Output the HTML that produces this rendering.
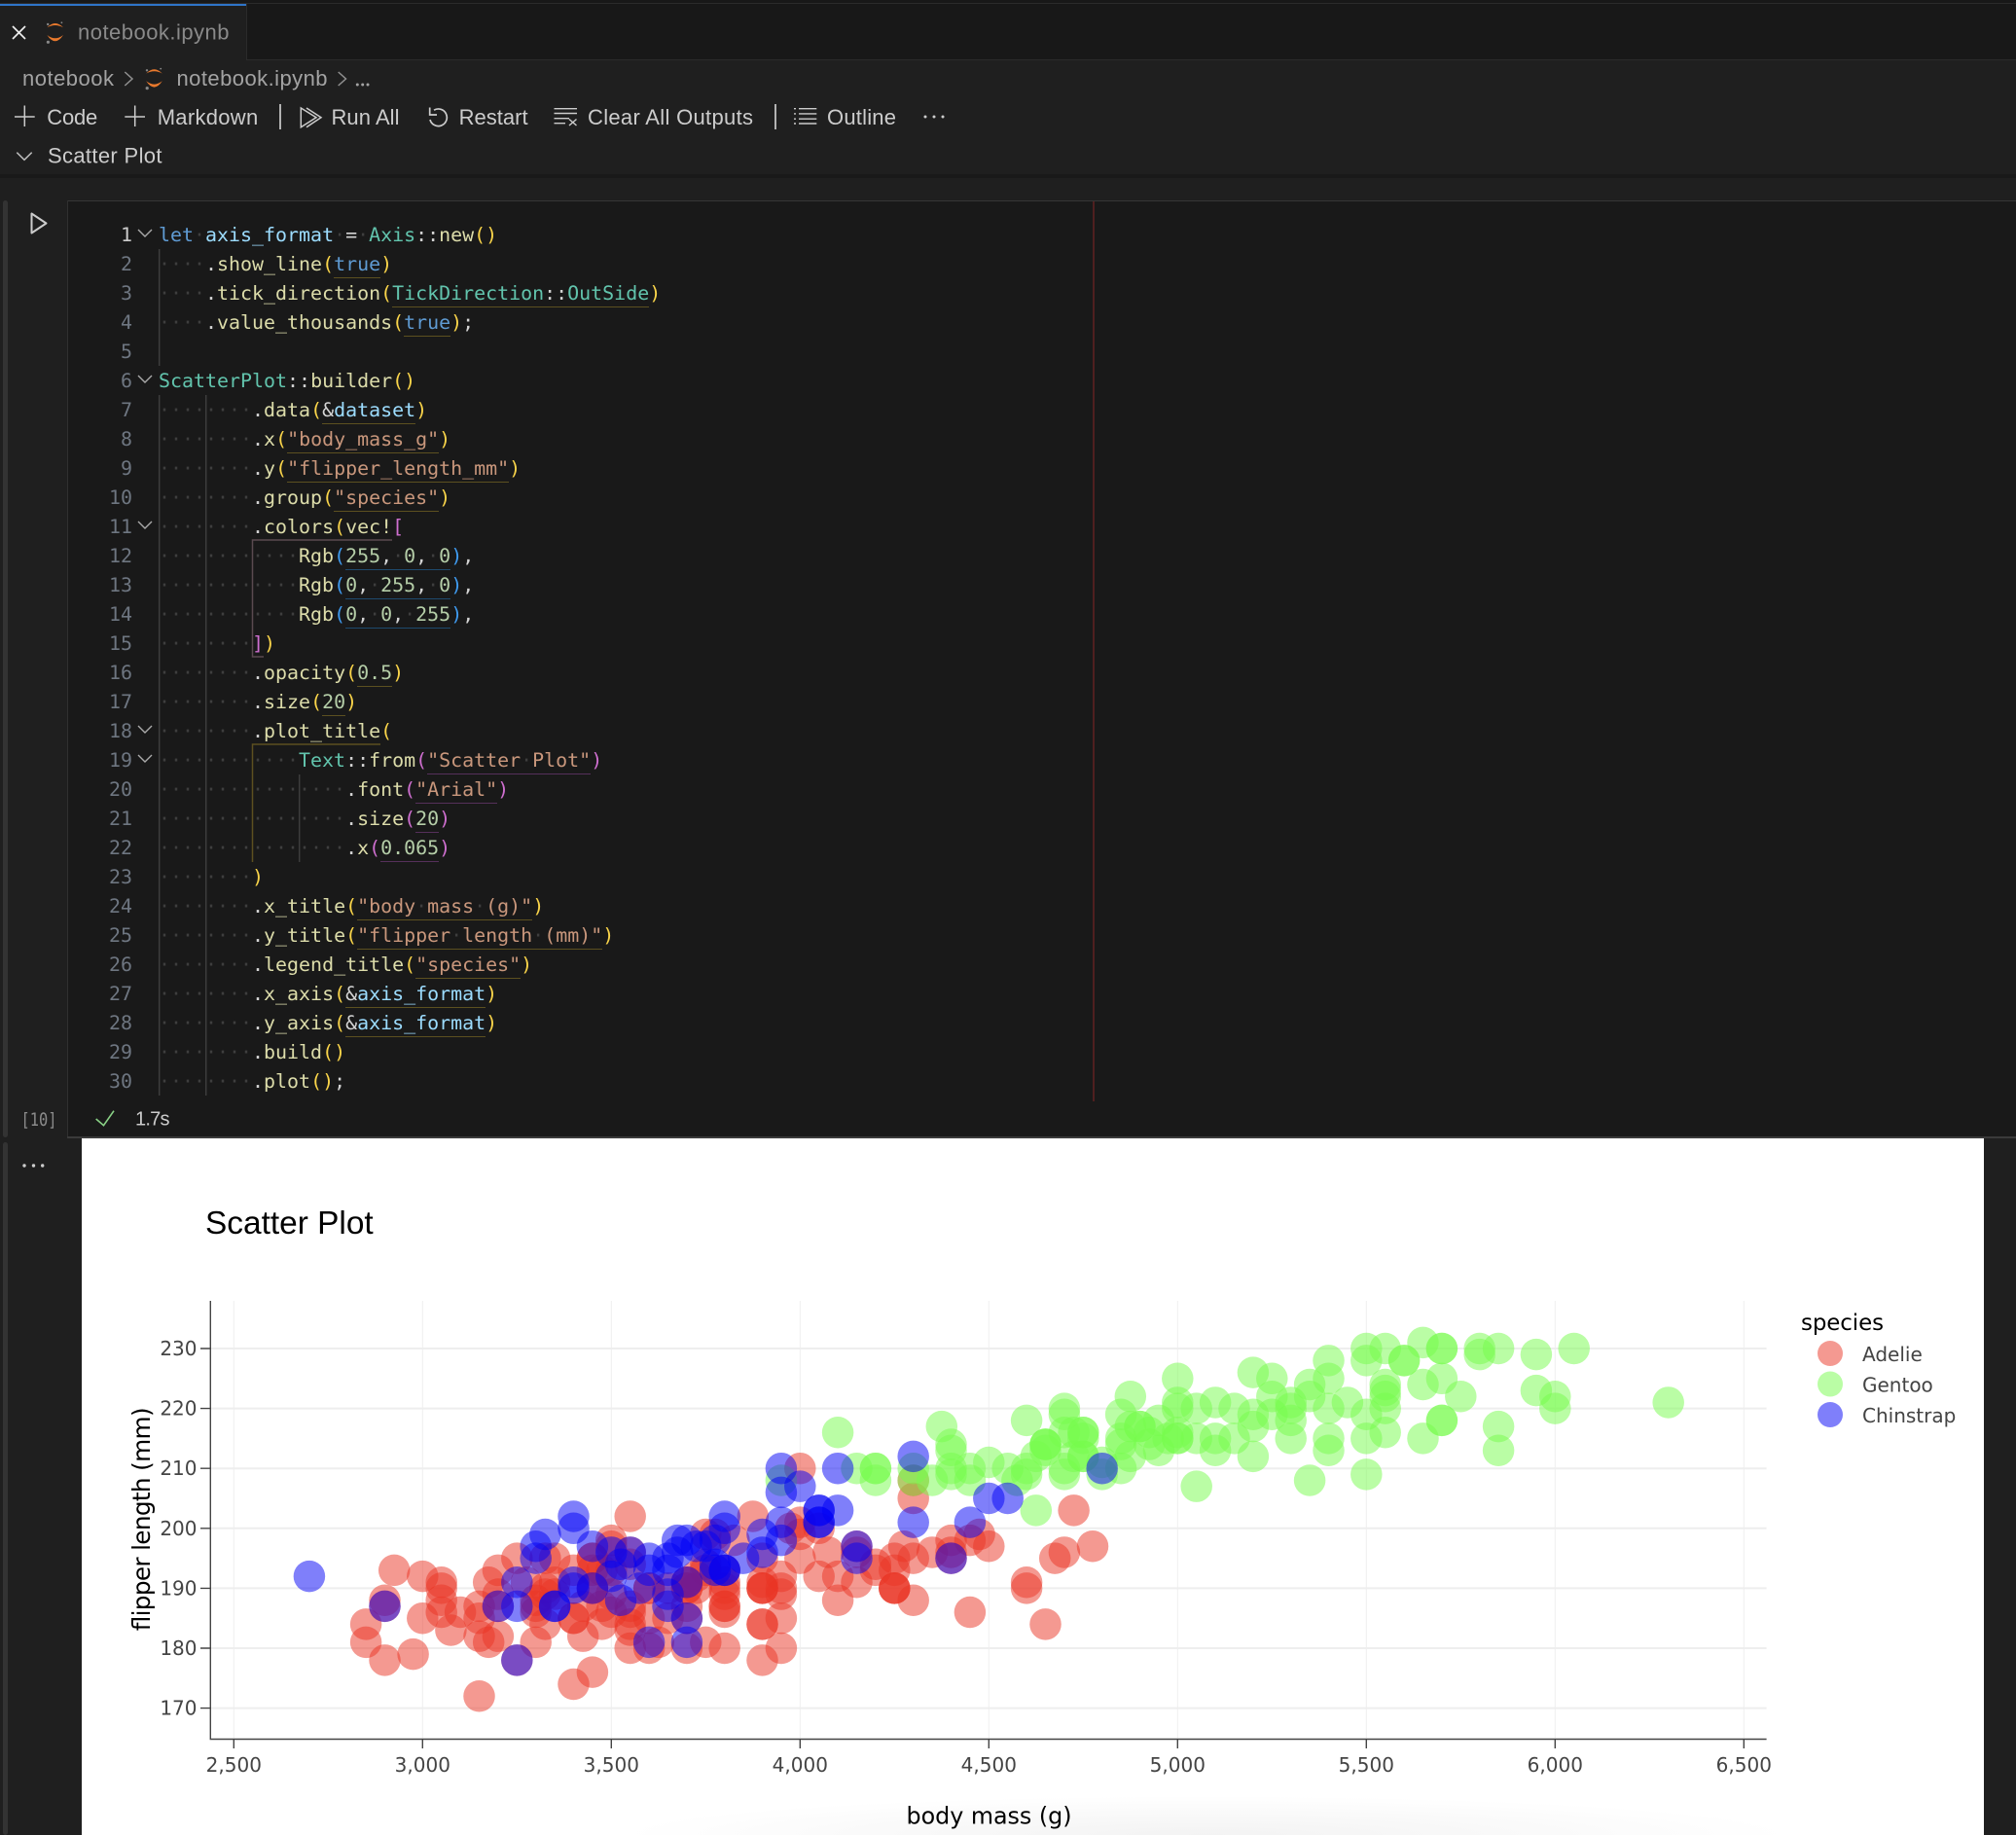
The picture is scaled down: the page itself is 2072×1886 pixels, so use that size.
<!DOCTYPE html>
<html><head><meta charset="utf-8"><title>notebook.ipynb</title>
<style>
html,body{margin:0;padding:0;background:#1f1f1f;width:2072px;height:1886px;overflow:hidden}
#ui{position:absolute;left:0;top:0}
ellipse{rx:41.88px;ry:2.638px}
.t{font-family:"Liberation Sans",sans-serif;font-size:22px;fill:#ccc}
.c{font-family:"DejaVu Sans",sans-serif;fill:#444;font-size:20px}
#num{position:absolute;left:90px;top:225.5px;width:46px;text-align:right;font:19.95px/30px "DejaVu Sans Mono",monospace;color:#6e7681}
#num div{height:30px}
#code{position:absolute;left:163px;top:225.5px;font:19.95px/30px "DejaVu Sans Mono",monospace;color:#d4d4d4}
#code div{height:30px;white-space:pre}
i{font-style:normal;color:#3e3e3e}
.k{color:#5f9bd3}.v{color:#9cdcfe}.h{color:#62c4ad}.f{color:#dcdcaa}.s{color:#c9977c}.n{color:#b5cea8}
.y{color:#f9d44a}.p{color:#cf6fd0}.b{color:#3f9bf0}
.u,.w,.x{display:inline-block;height:30px}
.u{box-shadow:inset 0 -1px #5c5020}.w{box-shadow:inset 0 -1px #1e4a6e}.x{box-shadow:inset 0 -1px #55305a}
</style></head><body>
<svg id="ui" width="2072" height="1886" viewBox="0 0 2072 1886" xmlns="http://www.w3.org/2000/svg">
<defs>
<radialGradient id="bg" cx=".5" cy="1" r=".5"><stop offset="0" stop-color="#f3f3f3"/><stop offset="1" stop-color="#fff"/></radialGradient>
<g id="jup"><path d="M-8.3-5Q0-13.6 8.3-5Q0-9.6-8.3-5Z" fill="#e8792d"/><path d="M-8.3 2.7Q0 15.3 8.3 2.7Q0 9.3-8.3 2.7Z" fill="#e8792d"/><circle cx="-7.5" cy="-8.3" r="1.2" fill="#888"/><circle cx="6.7" cy="-10" r=".9" fill="#888"/><circle cx="-7.3" cy="10" r="1.6" fill="#888"/></g>
</defs>
<!-- backgrounds -->
<rect width="2072" height="1886" fill="#1f1f1f"/>
<rect width="2072" height="62" fill="#181818"/>
<rect y="3" width="2072" height="1" fill="#2b2b2b"/>
<rect y="61" width="2072" height="1" fill="#2b2b2b"/>
<rect y="4" width="253" height="58" fill="#1f1f1f"/>
<rect x="253" y="4" width="1" height="58" fill="#2b2b2b"/>
<rect y="4" width="253" height="2" fill="#2f74c8"/>
<rect y="179" width="2072" height="4" fill="#191919"/>
<!-- cell -->
<rect x="70" y="207" width="2002" height="961" fill="#191919"/>
<rect x="69" y="206" width="2003" height="1" fill="#363636"/>
<rect x="69" y="206" width="1" height="963" fill="#303030"/>
<rect x="69" y="1168" width="2003" height="2" fill="#3a3a3a"/>
<rect x="3" y="206" width="5" height="963" rx="2.5" fill="#333"/>
<rect x="3" y="1174" width="5" height="712" rx="2.5" fill="#333"/>
<rect x="1123" y="207" width="2" height="925" fill="#4f1f1f"/>
<!-- tab -->
<path d="M13 27L26 40M26 27L13 40" stroke="#eee" stroke-width="1.7" fill="none"/>
<use href="#jup" transform="translate(56.7 33.3)"/>
<text class="t" x="80" y="40.5" textLength="155.5" style="fill:#8a8a8a">notebook.ipynb</text>
<!-- breadcrumbs -->
<text class="t" x="23" y="88" textLength="94" style="fill:#a3a3a3">notebook</text>
<path d="M128.3 74L136 81L128.3 88M347.7 74L355.5 81L347.7 88" stroke="#909090" stroke-width="1.5" fill="none"/>
<use href="#jup" transform="translate(158.5 80.6)"/>
<text class="t" x="181.5" y="88" textLength="155" style="fill:#a3a3a3">notebook.ipynb</text>
<g fill="#a3a3a3"><circle cx="367.3" cy="87" r="1.5"/><circle cx="372.7" cy="87" r="1.5"/><circle cx="378" cy="87" r="1.5"/></g>
<!-- toolbar -->
<g stroke="#ccc" stroke-width="1.5" fill="none">
<path d="M15 120H35.7M25.3 108.5V130M128.3 120H149M138.7 108.5V130"/>
<path d="M288 107V133M797 107V133" stroke-width="1.7"/>
<path d="M309.3 111L325 120.7L309.3 130.7ZM315 111L330 120.7L315 130.7"/>
<path d="M446 113.2A8.8 8.8 0 1 1 442 123" stroke-width="1.7"/><path d="M441.7 110.5V118H449" stroke-width="1.7"/>
<path d="M569.5 111.7H593M569.5 116.5H593M569.5 121.7H585M569.5 126.7H581M585 122.5L592.5 129M592.5 122.5L585 129" stroke-width="1.4"/>
<path d="M821 111.7H839.3M821 116.9H839.3M821 122.2H839.3M821 127H839.3" stroke-width="1.4"/>
<path d="M816 111.7H818M816 116.9H818M816 122.2H818M816 127H818" stroke-width="1.4"/>
<path d="M17.3 156.7L25 164.3L32.7 156.7" stroke="#bbb"/>
</g>
<g fill="#ccc"><circle cx="951" cy="120" r="1.5"/><circle cx="960" cy="120" r="1.5"/><circle cx="969" cy="120" r="1.5"/></g>
<text class="t" x="48.3" y="128" textLength="52">Code</text>
<text class="t" x="161.7" y="128" textLength="103.5">Markdown</text>
<text class="t" x="340.5" y="128" textLength="70">Run All</text>
<text class="t" x="471.6" y="128" textLength="71">Restart</text>
<text class="t" x="604" y="128" textLength="170">Clear All Outputs</text>
<text class="t" x="850" y="128" textLength="71">Outline</text>
<text class="t" x="49" y="167.3" textLength="117.5">Scatter Plot</text>
<!-- gutter -->
<path d="M32.5 219.5V239.5L47.5 229.5Z" fill="none" stroke="#ccc" stroke-width="2" stroke-linejoin="round"/>
<path d="M142 236L149 243L156 236M142 386L149 393L156 386M142 536L149 543L156 536M142 746L149 753L156 746M142 776L149 783L156 776" fill="none" stroke="#aaa" stroke-width="1.4"/>
<!-- guides -->
<g fill="none" stroke-width="1.5">
<path d="M163.7 256V376M163.7 406V1126M211.7 406V1126M307.7 796V886" stroke="#3d3d3d"/>
<path d="M403 555H259.5V675H271" stroke="#5a4a50"/>
<path d="M391 765H259.5V886" stroke="#5c5020"/>
</g>
<text x="21.5" y="1157" font-family="DejaVu Sans Mono,monospace" font-size="19" fill="#8b8b8b" textLength="37" lengthAdjust="spacingAndGlyphs">[10]</text>
<path d="M98.7 1150L106.5 1156.7L117 1141.7" fill="none" stroke="#89d185" stroke-width="1.6"/>
<text class="t" x="139" y="1156.5" textLength="35.5" style="font-size:20px">1.7s</text>
<g fill="#ccc"><circle cx="25" cy="1198" r="1.7"/><circle cx="34.5" cy="1198" r="1.7"/><circle cx="43.7" cy="1198" r="1.7"/></g>
<!-- output -->
<rect x="84" y="1170" width="1955" height="716" fill="#fff"/>
<rect x="640" y="1806" width="1200" height="80" fill="url(#bg)"/>
<text x="211" y="1268" font-family="Liberation Sans,sans-serif" font-size="33.4" fill="#000" textLength="172.7">Scatter Plot</text>
<g stroke="#eee" stroke-width="1">
<path d="M240.3 1337V1787M434.3 1337V1787M628.3 1337V1787M822.3 1337V1787M1016.3 1337V1787M1210.3 1337V1787M1404.3 1337V1787M1598.3 1337V1787M1792.3 1337V1787"/>
<path stroke-width="2" d="M216 1386H1815.6M216 1447.6H1815.6M216 1509.2H1815.6M216 1570.8H1815.6M216 1632.4H1815.6M216 1694H1815.6M216 1755.6H1815.6"/>
</g>
<g transform="matrix(.388 0 0 -6.16 -729.7 2802.8)" fill-opacity=".5">
<g fill="#ea3323">
<ellipse cx="3750" cy="181"/><ellipse cx="3800" cy="186"/><ellipse cx="3250" cy="195"/><ellipse cx="3450" cy="193"/><ellipse cx="3650" cy="190"/><ellipse cx="3625" cy="181"/><ellipse cx="4675" cy="195"/><ellipse cx="3475" cy="193"/><ellipse cx="4250" cy="190"/><ellipse cx="3300" cy="186"/><ellipse cx="3700" cy="180"/><ellipse cx="3200" cy="182"/><ellipse cx="3800" cy="191"/><ellipse cx="4400" cy="198"/><ellipse cx="3700" cy="185"/><ellipse cx="3450" cy="195"/><ellipse cx="4500" cy="197"/><ellipse cx="3325" cy="184"/><ellipse cx="4200" cy="194"/>
<ellipse cx="3400" cy="174"/><ellipse cx="3600" cy="180"/><ellipse cx="3800" cy="189"/><ellipse cx="3950" cy="185"/><ellipse cx="3800" cy="180"/><ellipse cx="3800" cy="187"/><ellipse cx="3550" cy="183"/><ellipse cx="3200" cy="187"/><ellipse cx="3150" cy="172"/><ellipse cx="3950" cy="180"/><ellipse cx="3250" cy="178"/><ellipse cx="3900" cy="178"/><ellipse cx="3300" cy="188"/><ellipse cx="3900" cy="184"/><ellipse cx="3325" cy="195"/><ellipse cx="4150" cy="196"/><ellipse cx="3950" cy="190"/><ellipse cx="3550" cy="180"/><ellipse cx="3300" cy="181"/><ellipse cx="4650" cy="184"/>
<ellipse cx="3150" cy="182"/><ellipse cx="3900" cy="195"/><ellipse cx="3100" cy="186"/><ellipse cx="4400" cy="196"/><ellipse cx="3000" cy="185"/><ellipse cx="4600" cy="190"/><ellipse cx="3425" cy="182"/><ellipse cx="2975" cy="179"/><ellipse cx="3450" cy="190"/><ellipse cx="4150" cy="191"/><ellipse cx="3500" cy="186"/><ellipse cx="4300" cy="188"/><ellipse cx="3450" cy="190"/><ellipse cx="4050" cy="200"/><ellipse cx="2900" cy="187"/><ellipse cx="3700" cy="191"/><ellipse cx="3550" cy="186"/><ellipse cx="3800" cy="193"/><ellipse cx="2850" cy="181"/><ellipse cx="3750" cy="194"/>
<ellipse cx="3150" cy="185"/><ellipse cx="4400" cy="195"/><ellipse cx="3600" cy="185"/><ellipse cx="4050" cy="192"/><ellipse cx="2850" cy="184"/><ellipse cx="3950" cy="192"/><ellipse cx="3350" cy="195"/><ellipse cx="4100" cy="188"/><ellipse cx="3050" cy="190"/><ellipse cx="4450" cy="198"/><ellipse cx="3600" cy="190"/><ellipse cx="3900" cy="190"/><ellipse cx="3550" cy="196"/><ellipse cx="4150" cy="197"/><ellipse cx="3700" cy="190"/><ellipse cx="4250" cy="195"/><ellipse cx="3700" cy="191"/><ellipse cx="3900" cy="184"/><ellipse cx="3550" cy="187"/><ellipse cx="4000" cy="195"/>
<ellipse cx="3200" cy="189"/><ellipse cx="4700" cy="196"/><ellipse cx="3800" cy="187"/><ellipse cx="4200" cy="193"/><ellipse cx="3350" cy="191"/><ellipse cx="3550" cy="194"/><ellipse cx="3800" cy="190"/><ellipse cx="3500" cy="189"/><ellipse cx="3950" cy="189"/><ellipse cx="3600" cy="190"/><ellipse cx="3550" cy="202"/><ellipse cx="4300" cy="205"/><ellipse cx="3400" cy="185"/><ellipse cx="4450" cy="186"/><ellipse cx="3300" cy="187"/><ellipse cx="4300" cy="208"/><ellipse cx="3700" cy="190"/><ellipse cx="4350" cy="196"/><ellipse cx="2900" cy="178"/><ellipse cx="4100" cy="192"/>
<ellipse cx="3725" cy="192"/><ellipse cx="4725" cy="203"/><ellipse cx="3075" cy="183"/><ellipse cx="4250" cy="190"/><ellipse cx="2925" cy="193"/><ellipse cx="3550" cy="184"/><ellipse cx="3750" cy="199"/><ellipse cx="3900" cy="190"/><ellipse cx="3175" cy="181"/><ellipse cx="4775" cy="197"/><ellipse cx="3825" cy="198"/><ellipse cx="4600" cy="191"/><ellipse cx="3200" cy="193"/><ellipse cx="4275" cy="197"/><ellipse cx="3900" cy="191"/><ellipse cx="4075" cy="196"/><ellipse cx="2900" cy="188"/><ellipse cx="3775" cy="199"/><ellipse cx="3350" cy="189"/><ellipse cx="3325" cy="189"/>
<ellipse cx="3150" cy="187"/><ellipse cx="3500" cy="198"/><ellipse cx="3450" cy="176"/><ellipse cx="3875" cy="202"/><ellipse cx="3050" cy="186"/><ellipse cx="4000" cy="199"/><ellipse cx="3275" cy="191"/><ellipse cx="4300" cy="195"/><ellipse cx="3050" cy="191"/><ellipse cx="4000" cy="210"/><ellipse cx="3325" cy="190"/><ellipse cx="3500" cy="197"/><ellipse cx="3500" cy="193"/><ellipse cx="4475" cy="199"/><ellipse cx="3425" cy="187"/><ellipse cx="3900" cy="190"/><ellipse cx="3175" cy="191"/><ellipse cx="3975" cy="200"/><ellipse cx="3400" cy="185"/><ellipse cx="4250" cy="193"/>
<ellipse cx="3400" cy="193"/><ellipse cx="3475" cy="187"/><ellipse cx="3050" cy="188"/><ellipse cx="3725" cy="190"/><ellipse cx="3000" cy="192"/><ellipse cx="3650" cy="185"/><ellipse cx="4250" cy="190"/><ellipse cx="3475" cy="184"/><ellipse cx="3450" cy="195"/><ellipse cx="3750" cy="193"/><ellipse cx="3700" cy="187"/><ellipse cx="4000" cy="201"/>
</g>
<g fill="#75fb4c">
<ellipse cx="4500" cy="211"/><ellipse cx="5700" cy="230"/><ellipse cx="4450" cy="210"/><ellipse cx="5700" cy="218"/><ellipse cx="5400" cy="215"/><ellipse cx="4550" cy="210"/><ellipse cx="4800" cy="211"/><ellipse cx="5200" cy="219"/><ellipse cx="4400" cy="209"/><ellipse cx="5150" cy="215"/><ellipse cx="4650" cy="214"/><ellipse cx="5550" cy="216"/><ellipse cx="4650" cy="214"/><ellipse cx="5850" cy="213"/><ellipse cx="4200" cy="210"/><ellipse cx="5850" cy="217"/><ellipse cx="4150" cy="210"/><ellipse cx="6300" cy="221"/><ellipse cx="4800" cy="209"/><ellipse cx="5350" cy="222"/>
<ellipse cx="5700" cy="218"/><ellipse cx="5000" cy="215"/><ellipse cx="4400" cy="213"/><ellipse cx="5050" cy="215"/><ellipse cx="5000" cy="215"/><ellipse cx="5100" cy="215"/><ellipse cx="4100" cy="216"/><ellipse cx="5650" cy="215"/><ellipse cx="4600" cy="210"/><ellipse cx="5550" cy="220"/><ellipse cx="5250" cy="222"/><ellipse cx="4700" cy="209"/><ellipse cx="5050" cy="207"/><ellipse cx="6050" cy="230"/><ellipse cx="5150" cy="220"/><ellipse cx="5400" cy="220"/><ellipse cx="4950" cy="213"/><ellipse cx="5250" cy="219"/><ellipse cx="4350" cy="208"/><ellipse cx="5350" cy="208"/>
<ellipse cx="3950" cy="208"/><ellipse cx="5700" cy="225"/><ellipse cx="4300" cy="210"/><ellipse cx="4750" cy="216"/><ellipse cx="5550" cy="222"/><ellipse cx="4900" cy="217"/><ellipse cx="4200" cy="210"/><ellipse cx="5400" cy="225"/><ellipse cx="5100" cy="213"/><ellipse cx="5300" cy="215"/><ellipse cx="4850" cy="210"/><ellipse cx="5300" cy="220"/><ellipse cx="4400" cy="210"/><ellipse cx="5000" cy="225"/><ellipse cx="4900" cy="217"/><ellipse cx="5050" cy="220"/><ellipse cx="4300" cy="208"/><ellipse cx="5000" cy="220"/><ellipse cx="4450" cy="208"/><ellipse cx="5550" cy="224"/>
<ellipse cx="4200" cy="208"/><ellipse cx="5300" cy="221"/><ellipse cx="4400" cy="214"/><ellipse cx="5650" cy="231"/><ellipse cx="4700" cy="219"/><ellipse cx="5700" cy="230"/><ellipse cx="4650" cy="214"/><ellipse cx="5800" cy="229"/><ellipse cx="4700" cy="220"/><ellipse cx="5550" cy="223"/><ellipse cx="4750" cy="216"/><ellipse cx="5000" cy="221"/><ellipse cx="5100" cy="221"/><ellipse cx="5200" cy="217"/><ellipse cx="4700" cy="216"/><ellipse cx="5800" cy="230"/><ellipse cx="4600" cy="209"/><ellipse cx="6000" cy="220"/><ellipse cx="4750" cy="215"/><ellipse cx="5950" cy="223"/>
<ellipse cx="4625" cy="212"/><ellipse cx="5450" cy="221"/><ellipse cx="4725" cy="212"/><ellipse cx="5350" cy="224"/><ellipse cx="4750" cy="212"/><ellipse cx="5600" cy="228"/><ellipse cx="4600" cy="218"/><ellipse cx="5300" cy="218"/><ellipse cx="4875" cy="212"/><ellipse cx="5550" cy="230"/><ellipse cx="4950" cy="218"/><ellipse cx="5400" cy="228"/><ellipse cx="4750" cy="212"/><ellipse cx="5650" cy="224"/><ellipse cx="4850" cy="214"/><ellipse cx="5200" cy="226"/><ellipse cx="4925" cy="216"/><ellipse cx="4875" cy="222"/><ellipse cx="4625" cy="203"/><ellipse cx="5250" cy="225"/>
<ellipse cx="4850" cy="219"/><ellipse cx="5600" cy="228"/><ellipse cx="4975" cy="215"/><ellipse cx="5500" cy="228"/><ellipse cx="4725" cy="216"/><ellipse cx="5500" cy="215"/><ellipse cx="4700" cy="210"/><ellipse cx="5500" cy="219"/><ellipse cx="4575" cy="208"/><ellipse cx="5500" cy="209"/><ellipse cx="5000" cy="216"/><ellipse cx="5950" cy="229"/><ellipse cx="4650" cy="213"/><ellipse cx="5500" cy="230"/><ellipse cx="4375" cy="217"/><ellipse cx="5850" cy="230"/><ellipse cx="4875" cy="217"/><ellipse cx="6000" cy="222"/><ellipse cx="4925" cy="214"/><ellipse cx="4850" cy="215"/><ellipse cx="5750" cy="222"/><ellipse cx="5200" cy="212"/><ellipse cx="5400" cy="213"/>
</g>
<g fill="#0000f5">
<ellipse cx="3500" cy="192"/><ellipse cx="3900" cy="196"/><ellipse cx="3650" cy="193"/><ellipse cx="3525" cy="188"/><ellipse cx="3725" cy="197"/><ellipse cx="3950" cy="198"/><ellipse cx="3250" cy="178"/><ellipse cx="3750" cy="197"/><ellipse cx="4150" cy="195"/><ellipse cx="3700" cy="198"/><ellipse cx="3800" cy="193"/><ellipse cx="3775" cy="194"/><ellipse cx="3700" cy="185"/><ellipse cx="4050" cy="201"/><ellipse cx="3575" cy="190"/><ellipse cx="4050" cy="201"/><ellipse cx="3300" cy="197"/><ellipse cx="3700" cy="181"/><ellipse cx="3450" cy="190"/><ellipse cx="4400" cy="195"/>
<ellipse cx="3600" cy="181"/><ellipse cx="3400" cy="191"/><ellipse cx="2900" cy="187"/><ellipse cx="3800" cy="193"/><ellipse cx="3300" cy="195"/><ellipse cx="4150" cy="197"/><ellipse cx="3400" cy="200"/><ellipse cx="3800" cy="200"/><ellipse cx="3700" cy="191"/><ellipse cx="4550" cy="205"/><ellipse cx="3200" cy="187"/><ellipse cx="4300" cy="201"/><ellipse cx="3350" cy="187"/><ellipse cx="4100" cy="203"/><ellipse cx="3600" cy="195"/><ellipse cx="3900" cy="199"/><ellipse cx="3850" cy="195"/><ellipse cx="4800" cy="210"/><ellipse cx="2700" cy="192"/><ellipse cx="4500" cy="205"/>
<ellipse cx="3950" cy="210"/><ellipse cx="3650" cy="187"/><ellipse cx="3550" cy="196"/><ellipse cx="3500" cy="196"/><ellipse cx="3675" cy="196"/><ellipse cx="4450" cy="201"/><ellipse cx="3400" cy="190"/><ellipse cx="4300" cy="212"/><ellipse cx="3250" cy="187"/><ellipse cx="3675" cy="198"/><ellipse cx="3325" cy="199"/><ellipse cx="3950" cy="201"/><ellipse cx="3600" cy="193"/><ellipse cx="4050" cy="203"/><ellipse cx="3350" cy="187"/><ellipse cx="3450" cy="197"/><ellipse cx="3250" cy="191"/><ellipse cx="4050" cy="203"/><ellipse cx="3800" cy="202"/><ellipse cx="3525" cy="194"/><ellipse cx="3950" cy="206"/><ellipse cx="3650" cy="189"/><ellipse cx="3650" cy="195"/><ellipse cx="4000" cy="207"/><ellipse cx="3400" cy="202"/><ellipse cx="3775" cy="193"/><ellipse cx="4100" cy="210"/><ellipse cx="3775" cy="198"/>
</g>
</g>
<g stroke="#444" stroke-width="1.4" fill="none">
<path d="M216.3 1337V1788M215.6 1787.5H1815.6"/>
<path d="M206 1386H216M206 1447.6H216M206 1509.2H216M206 1570.8H216M206 1632.4H216M206 1694H216M206 1755.6H216"/>
<path d="M240.3 1788V1797M434.3 1788V1797M628.3 1788V1797M822.3 1788V1797M1016.3 1788V1797M1210.3 1788V1797M1404.3 1788V1797M1598.3 1788V1797M1792.3 1788V1797"/>
</g>
<g class="c" text-anchor="end">
<text x="202.5" y="1393">230</text><text x="202.5" y="1454.6">220</text><text x="202.5" y="1516.2">210</text><text x="202.5" y="1577.8">200</text><text x="202.5" y="1639.4">190</text><text x="202.5" y="1701">180</text><text x="202.5" y="1762.6">170</text>
</g>
<g class="c" text-anchor="middle">
<text x="240.3" y="1821">2,500</text><text x="434.3" y="1821">3,000</text><text x="628.3" y="1821">3,500</text><text x="822.3" y="1821">4,000</text><text x="1016.3" y="1821">4,500</text><text x="1210.3" y="1821">5,000</text><text x="1404.3" y="1821">5,500</text><text x="1598.3" y="1821">6,000</text><text x="1792.3" y="1821">6,500</text>
</g>
<text x="931.5" y="1874.5" font-family="DejaVu Sans,sans-serif" font-size="23.8" fill="#000" textLength="170">body mass (g)</text>
<text transform="translate(154 1677) rotate(-90)" font-family="DejaVu Sans,sans-serif" font-size="24.8" fill="#000" textLength="230">flipper length (mm)</text>
<text x="1851" y="1367" font-family="DejaVu Sans,sans-serif" font-size="22.9" fill="#000" textLength="85">species</text>
<circle cx="1881" cy="1391" r="13" fill="#ea3323" fill-opacity=".5"/>
<circle cx="1881" cy="1422.5" r="13" fill="#75fb4c" fill-opacity=".5"/>
<circle cx="1881" cy="1454" r="13" fill="#0000f5" fill-opacity=".5"/>
<text class="c" x="1914" y="1399">Adelie</text>
<text class="c" x="1914" y="1430.5">Gentoo</text>
<text class="c" x="1914" y="1462">Chinstrap</text>
</svg>
<div id="num"><div style="color:#ccc">1</div><div>2</div><div>3</div><div>4</div><div>5</div><div>6</div><div>7</div><div>8</div><div>9</div><div>10</div><div>11</div><div>12</div><div>13</div><div>14</div><div>15</div><div>16</div><div>17</div><div>18</div><div>19</div><div>20</div><div>21</div><div>22</div><div>23</div><div>24</div><div>25</div><div>26</div><div>27</div><div>28</div><div>29</div><div>30</div></div>
<div id="code"><div><span class="k">let</span><i>·</i><span class="v">axis_format</span><i>·</i>=<i>·</i><span class="h">Axis</span>::<span class="f">new</span><span class="y">()</span></div>
<div><i>····</i>.<span class="f">show_line</span><span class="y">(</span><span class="u"><span class="k">true</span></span><span class="y">)</span></div>
<div><i>····</i>.<span class="f">tick_direction</span><span class="y">(</span><span class="u"><span class="h">TickDirection</span>::<span class="h">OutSide</span></span><span class="y">)</span></div>
<div><i>····</i>.<span class="f">value_thousands</span><span class="y">(</span><span class="u"><span class="k">true</span></span><span class="y">)</span>;</div>
<div></div>
<div><span class="h">ScatterPlot</span>::<span class="f">builder</span><span class="y">()</span></div>
<div><i>········</i>.<span class="f">data</span><span class="y">(</span><span class="u">&amp;<span class="v">dataset</span></span><span class="y">)</span></div>
<div><i>········</i>.<span class="f">x</span><span class="y">(</span><span class="u"><span class="s">"body_mass_g"</span></span><span class="y">)</span></div>
<div><i>········</i>.<span class="f">y</span><span class="y">(</span><span class="u"><span class="s">"flipper_length_mm"</span></span><span class="y">)</span></div>
<div><i>········</i>.<span class="f">group</span><span class="y">(</span><span class="u"><span class="s">"species"</span></span><span class="y">)</span></div>
<div><i>········</i>.<span class="f">colors</span><span class="y">(</span><span class="f">vec!</span><span class="p">[</span></div>
<div><i>············</i><span class="f">Rgb</span><span class="b">(</span><span class="w"><span class="n">255</span>,<i>·</i><span class="n">0</span>,<i>·</i><span class="n">0</span></span><span class="b">)</span>,</div>
<div><i>············</i><span class="f">Rgb</span><span class="b">(</span><span class="w"><span class="n">0</span>,<i>·</i><span class="n">255</span>,<i>·</i><span class="n">0</span></span><span class="b">)</span>,</div>
<div><i>············</i><span class="f">Rgb</span><span class="b">(</span><span class="w"><span class="n">0</span>,<i>·</i><span class="n">0</span>,<i>·</i><span class="n">255</span></span><span class="b">)</span>,</div>
<div><i>········</i><span class="p">]</span><span class="y">)</span></div>
<div><i>········</i>.<span class="f">opacity</span><span class="y">(</span><span class="u"><span class="n">0.5</span></span><span class="y">)</span></div>
<div><i>········</i>.<span class="f">size</span><span class="y">(</span><span class="u"><span class="n">20</span></span><span class="y">)</span></div>
<div><i>········</i>.<span class="f">plot_title</span><span class="y">(</span></div>
<div><i>············</i><span class="h">Text</span>::<span class="f">from</span><span class="p">(</span><span class="x"><span class="s">"Scatter<i>·</i>Plot"</span></span><span class="p">)</span></div>
<div><i>················</i>.<span class="f">font</span><span class="p">(</span><span class="x"><span class="s">"Arial"</span></span><span class="p">)</span></div>
<div><i>················</i>.<span class="f">size</span><span class="p">(</span><span class="x"><span class="n">20</span></span><span class="p">)</span></div>
<div><i>················</i>.<span class="f">x</span><span class="p">(</span><span class="x"><span class="n">0.065</span></span><span class="p">)</span></div>
<div><i>········</i><span class="y">)</span></div>
<div><i>········</i>.<span class="f">x_title</span><span class="y">(</span><span class="u"><span class="s">"body<i>·</i>mass<i>·</i>(g)"</span></span><span class="y">)</span></div>
<div><i>········</i>.<span class="f">y_title</span><span class="y">(</span><span class="u"><span class="s">"flipper<i>·</i>length<i>·</i>(mm)"</span></span><span class="y">)</span></div>
<div><i>········</i>.<span class="f">legend_title</span><span class="y">(</span><span class="u"><span class="s">"species"</span></span><span class="y">)</span></div>
<div><i>········</i>.<span class="f">x_axis</span><span class="y">(</span><span class="u">&amp;<span class="v">axis_format</span></span><span class="y">)</span></div>
<div><i>········</i>.<span class="f">y_axis</span><span class="y">(</span><span class="u">&amp;<span class="v">axis_format</span></span><span class="y">)</span></div>
<div><i>········</i>.<span class="f">build</span><span class="y">()</span></div>
<div><i>········</i>.<span class="f">plot</span><span class="y">()</span>;</div></div>
</body></html>
